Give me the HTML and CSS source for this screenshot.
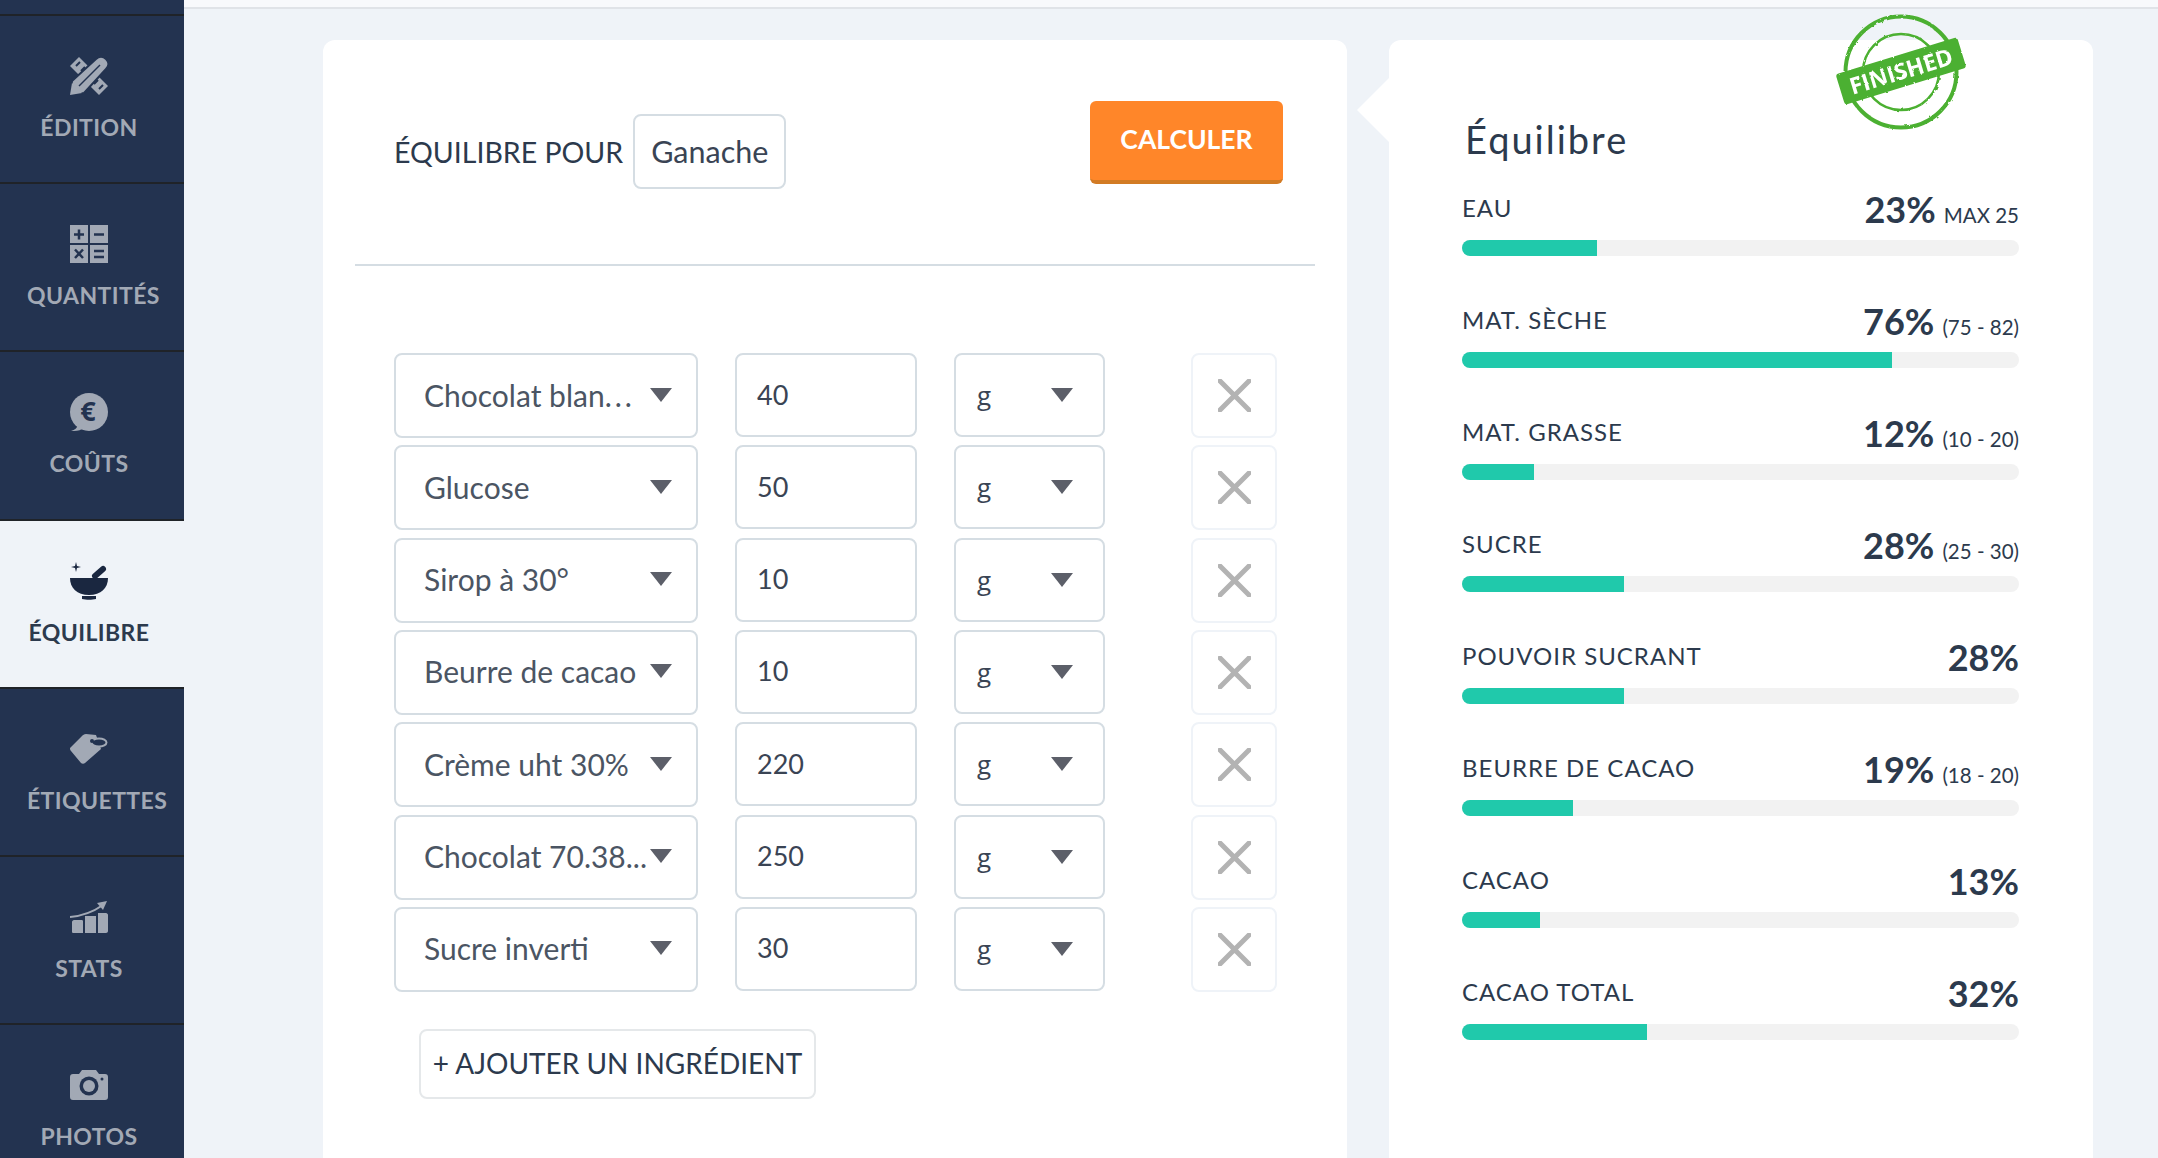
FILE: index.html
```html
<!DOCTYPE html>
<html lang="fr">
  <head>
    <meta charset="UTF-8" />
    <meta name="viewport" content="width=device-width, initial-scale=1.0" />
    <title>Équilibre</title>
    <link rel="stylesheet" href="styles.css">
  </head>
  <body>
    <!-- Side menu -->
    <nav class="sidebar">
      <div class="sidebar-cap"></div>

      <a class="nav-item">
        <span class="nav-icon">
          <svg width="38" height="38" viewBox="0 0 38 38">
            <path fill="#a2a9b5" d="M9 0 38 29 29 38 0 9Z"/>
            <path stroke="#233350" stroke-width="2" d="M6 9 10 5M11 14 15 10M24 27 28 23M29 32 33 28"/>
            <path fill="#a2a9b5" stroke="#233350" stroke-width="2" d="M0 38 2 24 26 2C29-1 33-1 36 2 39 5 39 9 36 12L14 36Z"/>
            <path fill="#a2a9b5" d="M0 38 2 26 12 36Z"/>
            <path stroke="#233350" stroke-width="1.500" d="M9 29 30 8"/>
          </svg>
        </span>
        <span class="nav-label">ÉDITION</span>
      </a>

      <a class="nav-item">
        <span class="nav-icon">
          <svg width="38" height="38" viewBox="0 0 38 38">
            <path fill="#a2a9b5" d="M0 0H18V18H0ZM20 0H38V18H20ZM0 20H18V38H0ZM20 20H38V38H20Z"/>
            <path stroke="#233350" stroke-width="2.500" d="M4 9.500H14M9 4.500V14.500M24 9.500H34M5 24.500 13 33M13 24.500 5 33M24 26H34M24 32H34"/>
          </svg>
        </span>
        <span class="nav-label">QUANTITÉS</span>
      </a>

      <a class="nav-item">
        <span class="nav-icon">
          <svg width="38" height="38" viewBox="0 0 38 38">
            <circle cx="19" cy="19" r="19" fill="#a2a9b5"/>
            <path fill="#a2a9b5" d="M1 38C5 37 7 35 8 32L12 36C9 38 5 38 1 38Z"/>
            <text class="euro" x="18" y="28" text-anchor="middle">€</text>
          </svg>
        </span>
        <span class="nav-label">COÛTS</span>
      </a>

      <a class="nav-item active">
        <span class="nav-icon">
          <svg width="38" height="38" viewBox="0 0 38 38">
            <path fill="#1a2740" d="M6 0 7 4 11 5 7 6 6 10 5 6 1 5 5 4Z"/>
            <path stroke="#1a2740" stroke-width="6" stroke-linecap="round" d="M25 14 33 7"/>
            <path fill="#1a2740" d="M0 16H38C38 26 31 33 19 33 7 33 0 26 0 16Z"/>
            <path fill="#1a2740" d="M12 34H26V37C22 38 16 38 12 37Z"/>
          </svg>
        </span>
        <span class="nav-label">ÉQUILIBRE</span>
      </a>

      <a class="nav-item">
        <span class="nav-icon">
          <svg width="38" height="30" viewBox="0 0 38 30">
            <path fill="#a2a9b5" d="M0 14 12 2C13 1 14 0 16 0L26 1 31 15 15 29C14 30 12 30 11 29L1 17C0 16 0 15 0 14Z"/>
            <ellipse cx="29" cy="8.500" rx="7.500" ry="4" fill="#233350" stroke="#a2a9b5" stroke-width="2"/>
            <circle cx="22" cy="7" r="2" fill="#233350"/>
          </svg>
        </span>
        <span class="nav-label">ÉTIQUETTES</span>
      </a>

      <a class="nav-item">
        <span class="nav-icon">
          <svg width="38" height="32" viewBox="0 0 38 32">
            <path fill="#a2a9b5" d="M4 19H12C13 19 13 20 13 21V32H3C2 32 2 31 2 30V21C2 20 3 19 4 19ZM15 15H26V32H15ZM28 12H36C37 12 38 13 38 14V30C38 31 37 32 36 32H28Z"/>
            <path fill="none" stroke="#a2a9b5" stroke-width="2" d="M0 16C12 15 23 11 33 4"/>
            <path fill="#a2a9b5" d="M37 0 27 2 33 9Z"/>
          </svg>
        </span>
        <span class="nav-label">STATS</span>
      </a>

      <a class="nav-item">
        <span class="nav-icon">
          <svg width="38" height="30" viewBox="0 0 38 30">
            <path fill="#a2a9b5" d="M3 4H9L12 0H26L29 4H35C37 4 38 5 38 7V27C38 29 37 30 35 30H3C1 30 0 29 0 27V7C0 5 1 4 3 4Z"/>
            <circle cx="19" cy="16" r="9.500" fill="#233350"/>
            <circle cx="19" cy="16" r="6" fill="#a2a9b5"/>
            <circle cx="32" cy="9" r="1.500" fill="#233350"/>
          </svg>
        </span>
        <span class="nav-label">PHOTOS</span>
      </a>
    </nav>

    <div class="page">
      <div class="topbar"></div>

      <main class="content">
        <!-- Recipe form -->
        <section class="card form-card">
          <div class="form-head">
            <div class="recipe-name">
              <span>ÉQUILIBRE POUR</span>
              <span class="name-box">Ganache</span>
            </div>
            <button class="btn-calc">CALCULER</button>
          </div>

          <div class="rows">
            <div class="row">
              <div class="field select"><span>Chocolat blan<em class="dots">...</em></span><i class="caret"></i></div>
              <div class="field amount">40</div>
              <div class="field unit"><span>g</span><i class="caret"></i></div>
              <button class="btn-del"><svg width="33" height="33" viewBox="0 0 33 33"><path d="M2 2 31 31M31 2 2 31"/></svg></button>
            </div>
            <div class="row">
              <div class="field select"><span>Glucose</span><i class="caret"></i></div>
              <div class="field amount">50</div>
              <div class="field unit"><span>g</span><i class="caret"></i></div>
              <button class="btn-del"><svg width="33" height="33" viewBox="0 0 33 33"><path d="M2 2 31 31M31 2 2 31"/></svg></button>
            </div>
            <div class="row">
              <div class="field select"><span>Sirop à 30°</span><i class="caret"></i></div>
              <div class="field amount">10</div>
              <div class="field unit"><span>g</span><i class="caret"></i></div>
              <button class="btn-del"><svg width="33" height="33" viewBox="0 0 33 33"><path d="M2 2 31 31M31 2 2 31"/></svg></button>
            </div>
            <div class="row">
              <div class="field select"><span>Beurre de cacao</span><i class="caret"></i></div>
              <div class="field amount">10</div>
              <div class="field unit"><span>g</span><i class="caret"></i></div>
              <button class="btn-del"><svg width="33" height="33" viewBox="0 0 33 33"><path d="M2 2 31 31M31 2 2 31"/></svg></button>
            </div>
            <div class="row">
              <div class="field select"><span>Crème uht 30%</span><i class="caret"></i></div>
              <div class="field amount">220</div>
              <div class="field unit"><span>g</span><i class="caret"></i></div>
              <button class="btn-del"><svg width="33" height="33" viewBox="0 0 33 33"><path d="M2 2 31 31M31 2 2 31"/></svg></button>
            </div>
            <div class="row">
              <div class="field select"><span>Chocolat 70.38...</span><i class="caret"></i></div>
              <div class="field amount">250</div>
              <div class="field unit"><span>g</span><i class="caret"></i></div>
              <button class="btn-del"><svg width="33" height="33" viewBox="0 0 33 33"><path d="M2 2 31 31M31 2 2 31"/></svg></button>
            </div>
            <div class="row">
              <div class="field select"><span>Sucre inverti</span><i class="caret"></i></div>
              <div class="field amount">30</div>
              <div class="field unit"><span>g</span><i class="caret"></i></div>
              <button class="btn-del"><svg width="33" height="33" viewBox="0 0 33 33"><path d="M2 2 31 31M31 2 2 31"/></svg></button>
            </div>
          </div>

          <button class="btn-add">+ AJOUTER UN INGRÉDIENT</button>
        </section>

        <!-- Balance results -->
        <section class="card balance-card">
          <svg class="stamp" width="136" height="124" viewBox="0 0 136 124">
            <defs>
              <filter id="rough">
                <feTurbulence type="fractalNoise" baseFrequency="0.25" numOctaves="2" seed="4"/>
                <feDisplacementMap in="SourceGraphic" scale="2.500"/>
              </filter>
            </defs>
            <g filter="url(#rough)">
              <circle cx="69" cy="62" r="55.500" fill="none" stroke="#4cb030" stroke-width="4"/>
              <circle cx="69" cy="62" r="38" fill="none" stroke="#4cb030" stroke-width="2.500"/>
              <g transform="rotate(-17 69 61)">
                <rect x="5.500" y="45" width="127" height="32" rx="3" fill="#4cb030"/>
                <text class="stamp-text" x="69" y="69.500" text-anchor="middle">FINISHED</text>
              </g>
            </g>
          </svg>

          <h2 class="balance-title">Équilibre</h2>

          <div class="meter">
            <div class="meter-head"><span class="meter-name">EAU</span><span class="meter-value"><b>23%</b> <small>MAX 25</small></span></div>
            <div class="track"><div class="fill" style="width: 24.2%"></div></div>
          </div>
          <div class="meter">
            <div class="meter-head"><span class="meter-name">MAT. SÈCHE</span><span class="meter-value"><b>76%</b> <small>(75 - 82)</small></span></div>
            <div class="track"><div class="fill" style="width: 77.2%"></div></div>
          </div>
          <div class="meter">
            <div class="meter-head"><span class="meter-name">MAT. GRASSE</span><span class="meter-value"><b>12%</b> <small>(10 - 20)</small></span></div>
            <div class="track"><div class="fill" style="width: 13%"></div></div>
          </div>
          <div class="meter">
            <div class="meter-head"><span class="meter-name">SUCRE</span><span class="meter-value"><b>28%</b> <small>(25 - 30)</small></span></div>
            <div class="track"><div class="fill" style="width: 29%"></div></div>
          </div>
          <div class="meter">
            <div class="meter-head"><span class="meter-name">POUVOIR SUCRANT</span><span class="meter-value"><b>28%</b></span></div>
            <div class="track"><div class="fill" style="width: 29%"></div></div>
          </div>
          <div class="meter">
            <div class="meter-head"><span class="meter-name">BEURRE DE CACAO</span><span class="meter-value"><b>19%</b> <small>(18 - 20)</small></span></div>
            <div class="track"><div class="fill" style="width: 20%"></div></div>
          </div>
          <div class="meter">
            <div class="meter-head"><span class="meter-name">CACAO</span><span class="meter-value"><b>13%</b></span></div>
            <div class="track"><div class="fill" style="width: 14%"></div></div>
          </div>
          <div class="meter">
            <div class="meter-head"><span class="meter-name">CACAO TOTAL</span><span class="meter-value"><b>32%</b></span></div>
            <div class="track"><div class="fill" style="width: 33.2%"></div></div>
          </div>
        </section>
      </main>
    </div>
  </body>
</html>
```

FILE: styles.css
```css
* {
  margin: 0;
  padding: 0;
  box-sizing: border-box;
}

body,
html {
  height: 100%;
  overflow: hidden;
}

body {
  display: flex;
  background-color: #eff3f8;
  color: #2c3a4d;
  font-family: Lato, "Noto Sans", sans-serif;
}

button {
  font-family: inherit;
  background: #fff;
}

/* Side menu */
.sidebar {
  flex: 0 0 184px;
  height: 100%;
  overflow: hidden;
  background-color: #233350;
}

.sidebar-cap {
  height: 14px;
}

.nav-item {
  display: block;
  height: 168.2px;
  padding-top: 41px;
  border-top: 2px solid #1f2328;
  color: #a2a9b5;
}

.nav-item.active {
  background-color: #eff3f8;
  color: #2c3a4d;
}

.nav-icon {
  display: flex;
  align-items: center;
  justify-content: center;
  width: 38px;
  height: 38px;
  margin-left: 70px;
}

.nav-label {
  display: block;
  width: 124px;
  margin: 16px 0 0 27px;
  font-size: 23px;
  font-weight: 700;
  letter-spacing: 0.4px;
  line-height: 32px;
  text-align: center;
  white-space: nowrap;
}

.euro {
  font-family: "Open Sans", sans-serif;
  font-size: 27px;
  font-weight: 700;
  fill: #233350;
}

/* Page */
.page {
  flex: 1;
  min-width: 0;
}

.topbar {
  height: 9px;
  background-color: #f8f9fc;
  border-bottom: 2px solid #e0e3e8;
}

.content {
  display: flex;
  gap: 42px;
  height: 1149px;
  padding: 31px 65px 0 139px;
}

.card {
  background-color: #fff;
  border-radius: 12px 12px 0 0;
}

/* Recipe form */
.form-card {
  width: 1024px;
}

.form-head {
  display: flex;
  justify-content: space-between;
  align-items: flex-start;
  height: 226px;
  margin: 0 32px;
  padding: 61px 32px 0 39px;
  border-bottom: 2px solid #d5dde3;
}

.recipe-name {
  display: flex;
  align-items: center;
  gap: 10px;
  margin-top: 13px;
  font-size: 28.5px;
}

.name-box {
  display: flex;
  align-items: center;
  height: 75px;
  padding: 0 16px 2px;
  background: #fff;
  border: 2px solid #d5dde3;
  border-radius: 8px;
  color: #3a4454;
  font-size: 30.5px;
}

.btn-calc {
  width: 193px;
  height: 83px;
  padding-bottom: 4px;
  background-color: #ff8629;
  border: 0;
  border-bottom: 4px solid #d27b24;
  border-radius: 6px;
  color: #fff;
  font-size: 26.5px;
  font-weight: 700;
}

.rows {
  display: flex;
  flex-direction: column;
  gap: 7.33px;
  margin: 87px 0 0 71px;
}

.row {
  display: flex;
  align-items: flex-start;
}

.field {
  display: flex;
  align-items: center;
  height: 84px;
  background: #fff;
  border: 2px solid #d5dde3;
  border-radius: 8px;
  color: #4b5563;
  font-size: 30px;
}

.field span {
  white-space: nowrap;
}

.select {
  justify-content: space-between;
  width: 304px;
  height: 85px;
  margin-right: 37px;
  padding: 0 24px 2px 28px;
}

.select span {
  width: 215px;
}

.dots {
  font-style: normal;
  letter-spacing: 3px;
}

.amount {
  width: 182px;
  margin-right: 37px;
  padding: 0 0 2px 20px;
  color: #3a4454;
  font-size: 27px;
}

.unit {
  justify-content: space-between;
  width: 151px;
  margin-right: 86px;
  padding: 0 30px 0 21px;
  color: #3a4454;
}

.unit span {
  font-family: "Open Sans", sans-serif;
  font-size: 26px;
}

.caret {
  width: 0;
  height: 0;
  border-left: 11.500px solid transparent;
  border-right: 11.500px solid transparent;
  border-top: 14px solid #5c5f69;
}

.btn-del {
  display: flex;
  align-items: center;
  justify-content: center;
  width: 86px;
  height: 85px;
  border: 2px solid #eff3f8;
  border-radius: 8px;
}

.btn-del path {
  fill: none;
  stroke: #b3b3b3;
  stroke-width: 5;
  stroke-linecap: round;
}

.btn-add {
  display: block;
  width: 397px;
  height: 70px;
  margin: 37px 0 0 96px;
  padding-bottom: 2px;
  border: 2px solid #e5e8ea;
  border-radius: 8px;
  color: #2c3a4d;
  font-size: 28px;
  white-space: nowrap;
}

/* Balance results */
.balance-card {
  position: relative;
  width: 704px;
  padding: 71px 74px 0 73px;
}

.balance-card::before {
  content: "";
  position: absolute;
  top: 38px;
  left: -32px;
  border-top: 32px solid transparent;
  border-bottom: 32px solid transparent;
  border-right: 32px solid #fff;
}

.stamp {
  position: absolute;
  top: -30px;
  left: 443px;
}

.stamp-text {
  font-family: "Open Sans", sans-serif;
  font-size: 23px;
  font-weight: 700;
  fill: #fff;
}

.balance-title {
  height: 79px;
  margin-left: 3px;
  font-size: 38px;
  font-weight: 400;
  letter-spacing: 2px;
  line-height: 56px;
}

.meter {
  height: 112px;
}

.meter-head {
  display: flex;
  justify-content: space-between;
  align-items: center;
  height: 50px;
  padding-bottom: 13px;
}

.meter-name {
  margin-top: -3px;
  font-size: 24px;
  letter-spacing: 1px;
}

.meter-value b {
  font-size: 36px;
  font-weight: 700;
}

.meter-value small {
  margin-left: 4px;
  font-size: 20.5px;
}

.track {
  height: 16px;
  overflow: hidden;
  background-color: #f2f2f2;
  border-radius: 8px;
}

.fill {
  height: 100%;
  background-color: #20c9ab;
}
```
